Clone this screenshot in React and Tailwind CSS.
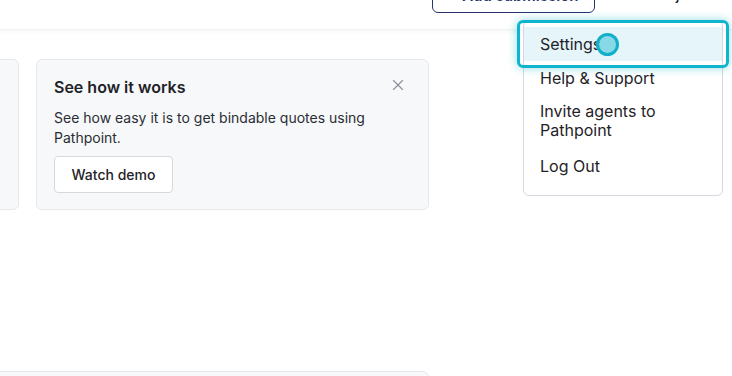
import { X } from "lucide-react";

const menuItems = ["Help & Support", "Invite agents to Pathpoint", "Log Out"];

export default function App() {
  return (
    <div className="relative h-[376px] w-[732px] overflow-hidden bg-white font-['Inter','Liberation_Sans',sans-serif] text-[#1f2328]">
      {/* Header */}
      <div className="flex h-[30px] items-start border-b border-[#f1f2f4] bg-white shadow-[0_2px_4px_rgba(0,0,0,0.04)]">
        <div className="-mt-[24px] flex items-center pl-[432px]">
          <button className="flex h-[37px] w-[163px] items-center justify-center rounded-md border border-[#27346b] pt-[4px] text-[15px] font-semibold text-[#27346b]">
            + Add submission
          </button>
          <span className="ml-[17px] pt-[2px] text-[15px] font-medium text-[#1f2328]">Eli Doranja</span>
        </div>
      </div>

      {/* Cards */}
      <div className="mt-[29px] flex gap-[17px]">
        <div className="-ml-[373px] h-[151px] w-[392px] shrink-0 rounded-md border border-[#e6e8ec] bg-[#f7f8fa]" />
        <div className="h-[151px] w-[393px] shrink-0 rounded-md border border-[#e6e8ec] bg-[#f7f8fa] px-[17px] pt-[15px]">
          <div className="flex items-start justify-between">
            <h2 className="text-[16px] font-semibold leading-6 text-[#1f2328]">See how it works</h2>
            <X className="mr-[4px] mt-[1px] h-[18px] w-[18px] text-[#8b9098]" strokeWidth={1.5} />
          </div>
          <p className="mt-[9px] text-[14px] leading-5 text-[#2a2e34]">
            See how easy it is to get bindable quotes using Pathpoint.
          </p>
          <button className="mt-[8px] h-[37px] w-[119px] rounded border border-[#d5d8de] bg-white text-[14px] font-medium text-[#1f2328]">
            Watch demo
          </button>
        </div>
      </div>

      {/* Bottom card edge */}
      <div className="-ml-[20px] mt-[161px] h-[40px] w-[449px] rounded-md border border-[#e6e8ec] bg-[#f7f8fa]" />

      {/* Dropdown menu */}
      <div className="absolute left-[523px] top-[20px] w-[200px] rounded-md border border-[#d5d8de] bg-white pb-[12px] pt-[6px]">
        <div className="relative">
          <div className="flex h-[34px] items-center bg-[#e5f5f9] px-[16px] text-[16px] leading-5">Settings</div>
          <div className="absolute -left-[7px] -right-[7px] -top-[7px] -bottom-[7px] rounded-md border-[3px] border-[#0fb5cd] shadow-[0_0_10px_rgba(15,181,205,0.45)]" />
          <div className="absolute left-[72px] top-[6px] h-[23px] w-[23px] rounded-full border-[3px] border-[#0fb0c8] bg-[#7dd6e4]/90" />
        </div>
        <div className="py-[7px] pl-[16px] pr-[24px] text-[16px] leading-5">{menuItems[0]}</div>
        <div className="py-[7px] pl-[16px] pr-[24px] text-[16px] leading-[19px]">{menuItems[1]}</div>
        <div className="pb-[7px] pt-[9px] pl-[16px] pr-[24px] text-[16px] leading-5">{menuItems[2]}</div>
      </div>
    </div>
  );
}
